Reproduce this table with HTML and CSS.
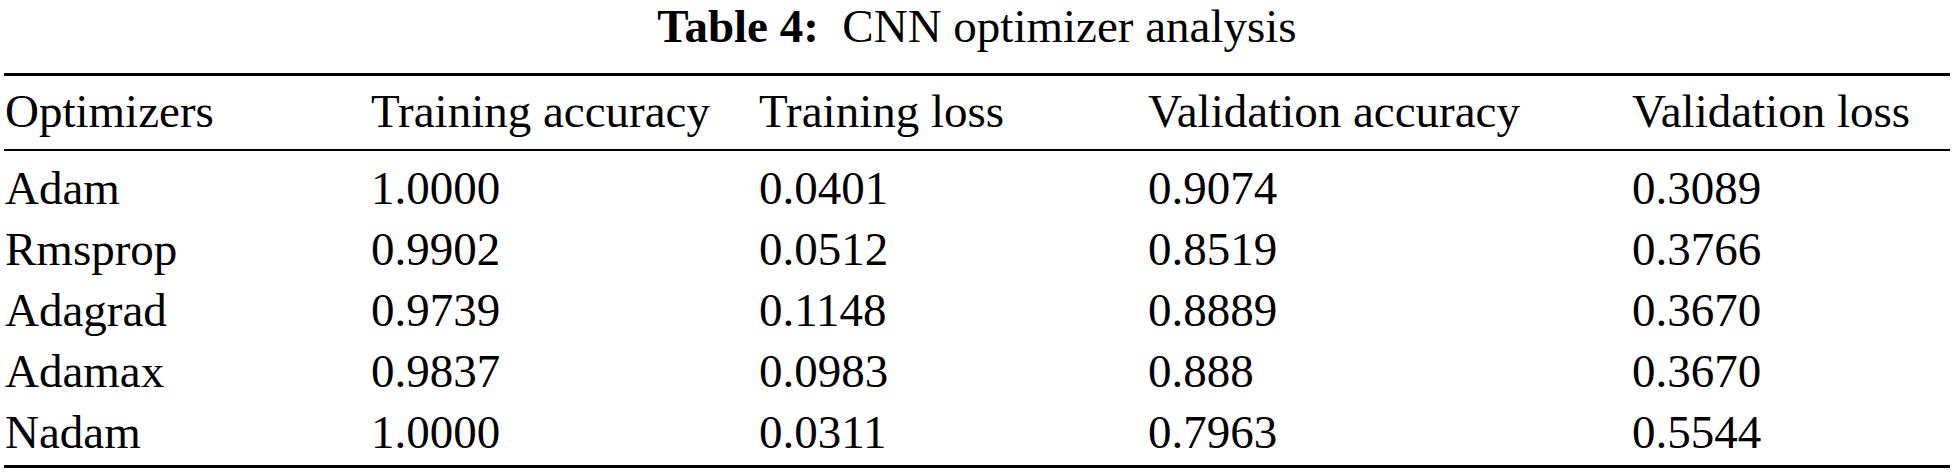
FILE: index.html
```html
<!DOCTYPE html>
<html lang="en">
<head>
<meta charset="utf-8">
<title>Table 4: CNN optimizer analysis</title>
<link rel="stylesheet" href="styles.css">
</head>
<body>
<div class="page">
  <div class="caption"><span class="label">Table 4:</span>&nbsp; CNN optimizer analysis</div>
  <table class="data">
    <colgroup>
      <col class="c1"><col class="c2"><col class="c3"><col class="c4"><col class="c5">
    </colgroup>
    <thead>
      <tr><th>Optimizers</th><th>Training accuracy</th><th>Training loss</th><th>Validation accuracy</th><th>Validation loss</th></tr>
    </thead>
    <tbody>
      <tr class="first"><td>Adam</td><td>1.0000</td><td>0.0401</td><td>0.9074</td><td>0.3089</td></tr>
      <tr><td>Rmsprop</td><td>0.9902</td><td>0.0512</td><td>0.8519</td><td>0.3766</td></tr>
      <tr><td>Adagrad</td><td>0.9739</td><td>0.1148</td><td>0.8889</td><td>0.3670</td></tr>
      <tr><td>Adamax</td><td>0.9837</td><td>0.0983</td><td>0.888</td><td>0.3670</td></tr>
      <tr class="last"><td>Nadam</td><td>1.0000</td><td>0.0311</td><td>0.7963</td><td>0.5544</td></tr>
    </tbody>
  </table>
</div>
</body>
</html>
```
FILE: styles.css
```css
html, body {
  margin: 0;
  padding: 0;
  background: #fff;
}
body {
  font-family: "Liberation Serif", "Times New Roman", serif;
  font-size: 47px;
  color: #000;
}
.page {
  width: 1954px;
  padding: 0 4px;
  box-sizing: border-box;
}
.caption {
  text-align: center;
  line-height: 52px;
  height: 52px;
  margin-bottom: 21px;
  white-space: nowrap;
}
.label {
  font-weight: bold;
}
.data {
  width: 1946px;
  table-layout: fixed;
  border-collapse: collapse;
  border-top: 3px solid #000;
  border-bottom: 3px solid #000;
}
.c1 { width: 366px; }
.c2 { width: 388px; }
.c3 { width: 389px; }
.c4 { width: 484px; }
.c5 { width: 319px; }
th, td {
  text-align: left;
  font-weight: normal;
  padding: 0 0 0 1px;
  line-height: 61px;
  white-space: nowrap;
}
thead th {
  padding-top: 5px;
  padding-bottom: 7px;
  border-bottom: 2px solid #000;
}
tbody tr.first td {
  padding-top: 7px;
}
tbody tr.last td {
  padding-bottom: 2px;
}
```
